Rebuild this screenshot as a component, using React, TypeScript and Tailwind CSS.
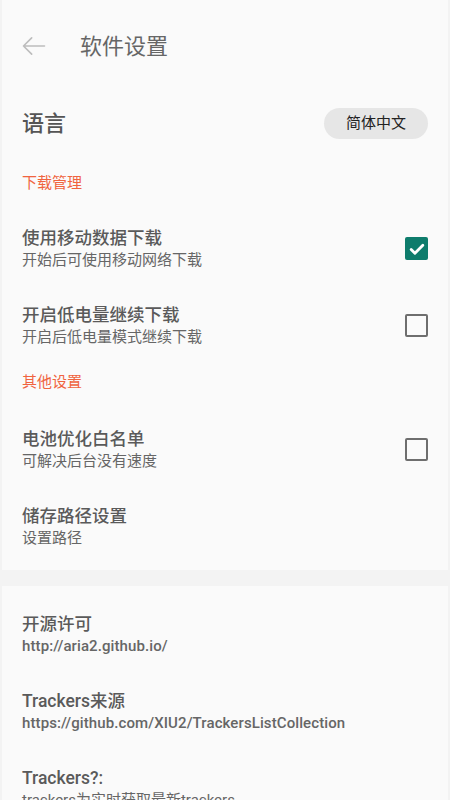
const font = "font-['Roboto','Noto_Sans_CJK_SC',sans-serif]";

type Row = { title: string; sub: string; check?: boolean | null; link?: boolean };

const DOWNLOAD: Row[] = [
  { title: "使用移动数据下载", sub: "开始后可使用移动网络下载", check: true },
  { title: "开启低电量继续下载", sub: "开启后低电量模式继续下载", check: false },
];

const OTHER: Row[] = [
  { title: "电池优化白名单", sub: "可解决后台没有速度", check: false },
  { title: "储存路径设置", sub: "设置路径", check: null },
];

const ABOUT: Row[] = [
  { title: "开源许可", sub: "http://aria2.github.io/", link: true },
  { title: "Trackers来源", sub: "https://github.com/XIU2/TrackersListCollection", link: true },
  { title: "Trackers?:", sub: "trackers为实时获取最新trackers" },
];

function Checkbox({ checked }: { checked: boolean }) {
  if (checked) {
    return (
      <span className="flex h-[23px] w-[23px] items-center justify-center rounded-[2px] bg-[#0e7c6c]">
        <svg viewBox="0 0 24 24" className="h-[20px] w-[20px]" fill="none" stroke="#fff" strokeWidth="3.4" strokeLinecap="round" strokeLinejoin="round">
          <path d="M5 12.5l4.5 4.5L19 7.5" />
        </svg>
      </span>
    );
  }
  return <span className="block h-[23px] w-[23px] rounded-[2px] border-[2.5px] border-[#6e6e6e]" />;
}

function SettingRow({ row }: { row: Row }) {
  return (
    <div className="flex h-[77px] items-center justify-between pl-[20px] pr-[20px]">
      <div className="flex min-w-0 flex-col">
        <span className="text-[17.5px] leading-[22px] font-medium text-[#5a5a5a]">{row.title}</span>
        <span
          className={`whitespace-nowrap text-[15px] leading-[22px] text-[#666] ${
            row.link ? "font-medium tracking-[0.1px]" : ""
          }`}
        >
          {row.sub}
        </span>
      </div>
      {row.check != null && <Checkbox checked={row.check} />}
    </div>
  );
}

function SectionLabel({ children }: { children: string }) {
  return <div className="pl-[20px] text-[15px] leading-[20px] text-[#f0643f]">{children}</div>;
}

export default function App() {
  return (
    <div className={`${font} h-[800px] w-[450px] overflow-hidden bg-[#f3f3f3] px-[2px]`}>
      <div className="bg-[#fafafa]">
        {/* Header */}
        <header className="flex h-[92px] items-center">
          <svg viewBox="0 0 24 24" className="ml-[18px] h-[28px] w-[28px]" fill="none" stroke="#bdbdbd" strokeWidth="1.4" strokeLinecap="round" strokeLinejoin="round">
            <path d="M21 12H3M10 5l-7 7 7 7" />
          </svg>
          <h1 className="ml-[32px] text-[22px] text-[#666]">软件设置</h1>
        </header>

        {/* Language */}
        <div className="flex h-[63px] items-center justify-between pl-[20px] pr-[20px]">
          <span className="text-[22px] font-medium text-[#555]">语言</span>
          <button type="button" className="h-[31px] w-[104px] rounded-full bg-[#e6e6e6] text-[15px] text-[#222]">
            简体中文
          </button>
        </div>

        <div className="mt-[18px] mb-[17px]">
          <SectionLabel>下载管理</SectionLabel>
        </div>
        {DOWNLOAD.map((r) => (
          <SettingRow key={r.title} row={r} />
        ))}

        <div className="mt-[8px] mb-[19px]">
          <SectionLabel>其他设置</SectionLabel>
        </div>
        {OTHER.map((r) => (
          <SettingRow key={r.title} row={r} />
        ))}
        <div className="h-[5px]" />
      </div>

      <div className="mt-[16px] bg-[#fafafa] pt-[10px]">
        {ABOUT.map((r) => (
          <SettingRow key={r.title} row={r} />
        ))}
      </div>
    </div>
  );
}
